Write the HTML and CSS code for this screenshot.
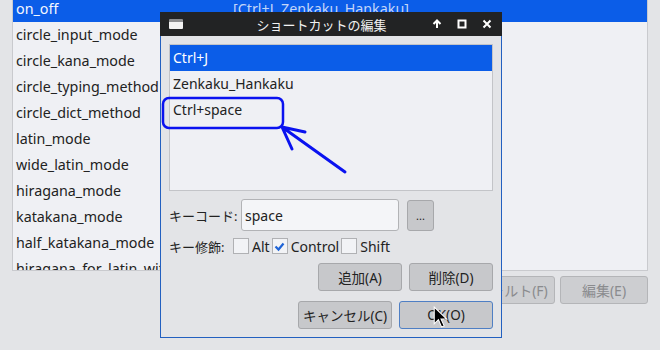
FILE: index.html
```html
<!doctype html>
<html>
  <head>
    <meta charset="UTF-8" />
    <title>ショートカットの編集</title>
    <link rel="stylesheet" href="styles.css">
  </head>
  <body>
    <div class="main">
      <div class="keylist">
        <div class="row selected"><span class="name">on_off</span><span class="keys">[Ctrl+J, Zenkaku_Hankaku]</span></div>
        <div class="row"><span class="name">circle_input_mode</span></div>
        <div class="row"><span class="name">circle_kana_mode</span></div>
        <div class="row"><span class="name">circle_typing_method</span></div>
        <div class="row"><span class="name">circle_dict_method</span></div>
        <div class="row"><span class="name">latin_mode</span></div>
        <div class="row"><span class="name">wide_latin_mode</span></div>
        <div class="row"><span class="name">hiragana_mode</span></div>
        <div class="row"><span class="name">katakana_mode</span></div>
        <div class="row"><span class="name">half_katakana_mode</span></div>
        <div class="row"><span class="name">hiragana_for_latin_with_shift</span></div>
      </div>
      <div class="main-buttons">
        <button class="btn disabled wide">デフォルト(F)</button>
        <button class="btn disabled">編集(E)</button>
      </div>
    </div>

    <div class="dialog">
      <div class="titlebar">
        <span class="win-icon"></span>
        <span class="title">ショートカットの編集</span>
        <span class="tb-buttons">
          <svg width="10" height="10" viewBox="0 0 10 10"><path d="M5 9V1.5M1.5 5L5 1.5L8.5 5" stroke="#fff" stroke-width="2" fill="none"/></svg>
          <svg width="10" height="10" viewBox="0 0 10 10"><rect x="1.5" y="1.5" width="7" height="7" stroke="#fff" stroke-width="2" fill="none"/></svg>
          <svg width="10" height="10" viewBox="0 0 10 10"><path d="M1.5 1.5L8.5 8.5M8.5 1.5L1.5 8.5" stroke="#fff" stroke-width="2" fill="none"/></svg>
        </span>
      </div>
      <div class="dialog-body">
        <div class="shortcuts">
          <div class="srow selected">Ctrl+J</div>
          <div class="srow">Zenkaku_Hankaku</div>
          <div class="srow">Ctrl+space</div>
        </div>
        <div class="field">
          <span class="label">キーコード:</span>
          <input class="keycode" type="text" value="space">
          <button class="btn dots">...</button>
        </div>
        <div class="field mods">
          <span class="label">キー修飾:</span>
          <span class="check"></span><span class="check-label">Alt</span>
          <span class="check checked">
            <svg width="13" height="13" viewBox="0 0 13 13"><path d="M2.5 6.5L5.5 9.5L10.5 3.5" stroke="#1e63d6" stroke-width="2.2" fill="none"/></svg>
          </span><span class="check-label">Control</span>
          <span class="check"></span><span class="check-label">Shift</span>
        </div>
        <div class="btn-row">
          <button class="btn">追加(A)</button>
          <button class="btn">削除(D)</button>
        </div>
        <div class="btn-row">
          <button class="btn cancel">キャンセル(C)</button>
          <button class="btn focus">OK(O)</button>
        </div>
      </div>
    </div>

    <!-- 注釈 -->
    <svg class="annotation" width="660" height="350" viewBox="0 0 660 350">
      <rect x="163" y="98" width="120" height="30" rx="6" ry="6" stroke="#0a12f0" stroke-width="2.5" fill="none"/>
      <path d="M345 172L282 127M282 127L305 132M282 127L292 149" stroke="#0a12f0" stroke-width="3" fill="none" stroke-linecap="round"/>
    </svg>

    <svg class="cursor" width="15" height="23" viewBox="0 0 14 22">
      <path d="M1 1V17L5 13L8 20L10.5 19L7.5 12.5H13Z" fill="#000" stroke="#fff" stroke-width="1"/>
    </svg>
  </body>
</html>
```

FILE: styles.css
```css
* {
  margin: 0;
  padding: 0;
  box-sizing: border-box;
}
body {
  width: 660px;
  height: 350px;
  overflow: hidden;
  position: relative;
  background-color: #e3e4e7;
  font-family: "Noto Sans", "Noto Sans CJK JP", sans-serif;
  font-size: 14px;
  color: #222;
}
.main {
  padding-left: 12px;
  width: 648px;
}
.keylist {
  margin-top: -4px;
  height: 275px;
  background-color: #eff0f4;
  border: 1px solid #c9cace;
  border-top: none;
  overflow: hidden;
  font-size: 14.3px;
}
.row {
  height: 26px;
  line-height: 26px;
  display: flex;
  padding-left: 3px;
  white-space: nowrap;
}
.row .name {
  width: 217px;
}
.row.selected {
  background-color: #0b5de8;
  color: #f4f7ff;
}
.row .keys {
  color: #c3d5f8;
}
.main-buttons {
  display: flex;
  justify-content: flex-end;
  gap: 5px;
  margin-top: 5px;
}
.btn {
  height: 28px;
  border: 1px solid #a7a8ab;
  border-radius: 3px;
  background-color: #c7c8cb;
  font-family: "Noto Sans", "Noto Sans CJK JP", sans-serif;
  font-size: 13.5px;
  color: #222;
}
.btn.disabled {
  width: 88px;
  font-size: 14px;
  color: #8a8b8e;
  background-color: #cdced1;
  border-color: #b4b5b8;
}
.btn.wide {
  width: 100px;
}

.dialog {
  position: absolute;
  left: 160px;
  top: 12px;
  width: 342px;
  height: 326px;
  border: 1px solid #2360c0;
  border-top: none;
  background-color: #e3e4e7;
}
.titlebar {
  height: 24px;
  margin: 0 -1px;
  background-color: #222324;
  color: #f2f2f2;
  display: flex;
  align-items: center;
  padding: 0 10px 0 9px;
  font-size: 13px;
}
.win-icon {
  width: 14px;
  height: 10px;
  background-color: #f3f3f3;
  border-top: 3px solid #8d8e90;
  border-radius: 1px;
}
.title {
  flex: 1;
  text-align: center;
  padding-left: 28px;
}
.tb-buttons {
  display: flex;
  gap: 15px;
}
.dialog-body {
  padding: 8px 8px 0 8px;
}
.shortcuts {
  height: 147px;
  background-color: #eff0f4;
  border: 1px solid #c3c4c8;
}
.srow {
  height: 26px;
  line-height: 26px;
  padding-left: 3px;
}
.srow.selected {
  background-color: #0b5de8;
  color: #fff;
}
.field {
  display: flex;
  align-items: center;
  margin-top: 8px;
  height: 32px;
}
.label {
  width: 72px;
  font-size: 13px;
}
.keycode {
  width: 158px;
  height: 32px;
  border: 1px solid #b2b3b6;
  border-radius: 3px;
  background-color: #f4f5f8;
  padding-left: 3px;
  font-family: "Noto Sans", sans-serif;
  font-size: 14px;
  color: #222;
}
.btn.dots {
  width: 27px;
  height: 31px;
  margin-left: 8px;
  font-size: 11px;
}
.mods {
  margin-top: 7px;
  height: 16px;
}
.mods .label {
  width: 64px;
}
.check {
  width: 16px;
  height: 16px;
  background-color: #f2f3f6;
  border: 1px solid #b0b1b4;
  display: flex;
  align-items: center;
  justify-content: center;
}
.check-label {
  margin: 0 2px 0 3px;
}
.btn-row {
  display: flex;
  justify-content: flex-end;
  gap: 7px;
  margin-top: 9px;
}
.btn-row .btn {
  width: 84px;
}
.btn-row + .btn-row {
  margin-top: 10px;
  gap: 7px;
}
.btn-row .btn.cancel {
  width: 94px;
}
.btn-row .btn.focus {
  width: 94px;
  border-color: #4f7fc4;
}

.annotation {
  position: absolute;
  left: 0;
  top: 0;
}
.cursor {
  position: absolute;
  left: 433px;
  top: 306px;
}
```
